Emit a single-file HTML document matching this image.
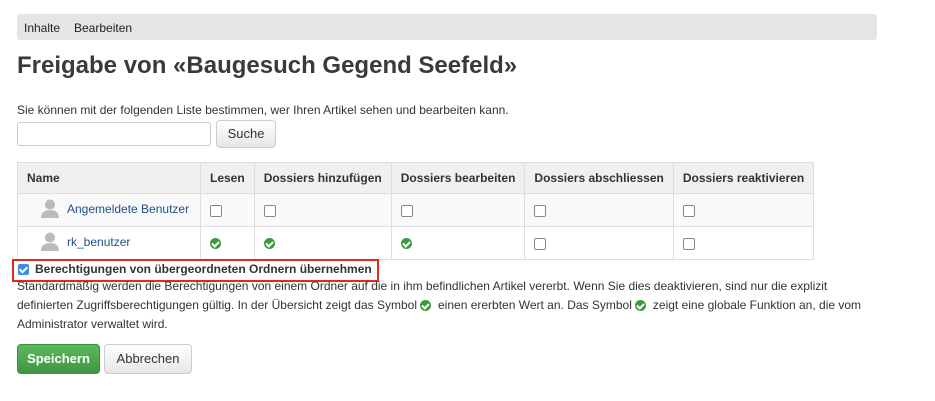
<!DOCTYPE html>
<html><head><meta charset="utf-8"><style>
body{margin:0;background:#fff;font-family:"Liberation Sans",sans-serif;font-size:12px;color:#333;position:relative;width:935px;height:401px;overflow:hidden}
.a{position:absolute}
.bar{left:17px;top:14px;width:860px;height:26px;background:#e5e5e5;border-radius:3px}
.bar span{position:absolute;top:7px;font-size:12px;color:#222}
h1{position:absolute;left:17px;top:52px;margin:0;font-size:24px;font-weight:bold;color:#3a3a3a}
.inp{left:17px;top:122px;width:192px;height:22px;border:1px solid #ccc;border-radius:3px}
.btn{border:1px solid #ccc;border-radius:4px;background:linear-gradient(#fff,#e6e6e6);text-align:center;color:#333;font-size:13px;box-sizing:border-box}
table{position:absolute;left:17px;top:162px;border-collapse:collapse;border:1px solid #ddd}
td,th{border-left:1px solid #ddd;padding:0 9px;text-align:left;font-size:12px}
th{height:30px;background:#f0f0f0;font-weight:bold;color:#333}
tr.r1 td{height:32px;background:#f9f9f9;border-top:1px solid #ddd}
tr.r2 td{height:32px;background:#fff;border-top:1px solid #ddd}
.cb{display:inline-block;width:10px;height:10px;border:1px solid #888;border-radius:2px;background:#fff;vertical-align:middle}
.ok{display:inline-block;width:11px;height:11px;border-radius:50%;background:#3d9a3d;vertical-align:middle;position:relative}
.ok:after{content:"";position:absolute;left:3px;top:2px;width:3px;height:5px;border:solid #fff;border-width:0 2px 2px 0;transform:rotate(45deg)}
.u{display:inline-block;width:18px;height:19px;vertical-align:middle;margin:-4px 8px 0 14px}
a{color:#1e4f8c;text-decoration:none}
</style></head><body>
<div class="a bar"><span style="left:7px">Inhalte</span><span style="left:57px">Bearbeiten</span></div>
<h1>Freigabe von «Baugesuch Gegend Seefeld»</h1>
<div class="a" style="left:17px;top:103px">Sie können mit der folgenden Liste bestimmen, wer Ihren Artikel sehen und bearbeiten kann.</div>
<div class="a inp"></div>
<div class="a btn" style="left:216px;top:120px;width:60px;height:28px;line-height:26px">Suche</div>
<table>
<tr><th style="width:164px;border-left:none">Name</th><th>Lesen</th><th>Dossiers hinzufügen</th><th>Dossiers bearbeiten</th><th>Dossiers abschliessen</th><th>Dossiers reaktivieren</th></tr>
<tr class="r1"><td style="border-left:none"><svg class="u" viewBox="0 0 16 17"><circle cx="8" cy="5" r="4.5" fill="#bbb"/><path d="M0 17c0-5 3-7 8-7s8 2 8 7z" fill="#bbb"/></svg><a>Angemeldete Benutzer</a></td><td><span class="cb"></span></td><td><span class="cb"></span></td><td><span class="cb"></span></td><td><span class="cb"></span></td><td><span class="cb"></span></td></tr>
<tr class="r2"><td style="border-left:none"><svg class="u" viewBox="0 0 16 17"><circle cx="8" cy="5" r="4.5" fill="#bbb"/><path d="M0 17c0-5 3-7 8-7s8 2 8 7z" fill="#bbb"/></svg><a>rk_benutzer</a></td><td><span class="ok"></span></td><td><span class="ok"></span></td><td><span class="ok"></span></td><td><span class="cb"></span></td><td><span class="cb"></span></td></tr>
</table>
<div class="a" style="left:12px;top:259px;width:363px;height:19px;border:2px solid #e8261b"></div>
<div class="a" style="left:18px;top:264px;width:11px;height:11px;background:#3b8ee8;border-radius:2px"><div style="position:absolute;left:3px;top:1px;width:3px;height:6px;border:solid #fff;border-width:0 2px 2px 0;transform:rotate(45deg)"></div></div>
<div class="a" style="left:35px;top:262px;font-weight:bold">Berechtigungen von übergeordneten Ordnern übernehmen</div>
<div class="a" style="left:17px;top:277px;width:868px;line-height:19px">Standardmäßig werden die Berechtigungen von einem Ordner auf die in ihm befindlichen Artikel vererbt. Wenn Sie dies deaktivieren, sind nur die explizit definierten Zugriffsberechtigungen gültig. In der Übersicht zeigt das Symbol <span class="ok"></span>&nbsp; einen ererbten Wert an. Das Symbol <span class="ok"></span>&nbsp; zeigt eine globale Funktion an, die vom Administrator verwaltet wird.</div>
<div class="a btn" style="left:17px;top:344px;width:83px;height:30px;line-height:28px;background:linear-gradient(#5cb85c,#419641);border-color:#3e8f3e;color:#fff;font-weight:bold">Speichern</div>
<div class="a btn" style="left:104px;top:344px;width:88px;height:30px;line-height:28px">Abbrechen</div>
</body></html>
